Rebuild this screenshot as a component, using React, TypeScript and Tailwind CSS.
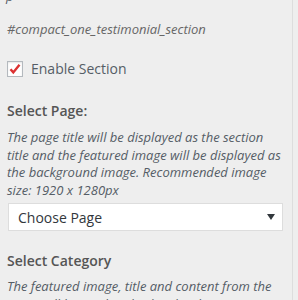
import React from 'react';

const font = { fontFamily: '"Open Sans", "Noto Sans", sans-serif' };

const App = () => {
  return (
    <div className="w-[298px] h-[300px] overflow-hidden bg-[#eeeeee] flex text-[#555d66]" style={font}>
      <div className="w-[293px] shrink-0 border-r border-[#dddddd] pl-[7px] pr-[10px]">
        {/* tail of the previous control's text */}
        <p className="text-[13px] leading-[18px] italic -mt-[13px] -ml-[1px]">p</p>

        <p className="mt-[15px] text-[13px] leading-[18px] italic text-[#666]">#compact_one_testimonial_section</p>

        <label className="mt-[21px] flex items-center gap-[8px]">
          <span className="relative w-[16px] h-[16px] bg-white border border-[#b4b9be] shadow-[inset_0_1px_2px_rgba(0,0,0,0.1)]">
            <svg viewBox="0 0 16 16" className="w-[16px] h-[16px] absolute -left-[1px] -top-[1px]">
              <path d="M3.5 8.2l2.8 3.2 6.2-7.6" fill="none" stroke="#dc3232" strokeWidth="2.4" strokeLinejoin="miter" />
            </svg>
          </span>
          <span className="text-[14px] leading-[20px]">Enable Section</span>
        </label>

        <h3 className="mt-[20px] text-[14px] leading-[24px] font-semibold text-[#555]">Select Page:</h3>
        <p className="mt-[6px] text-[13px] leading-[17.5px] italic">
          The page title will be displayed as the section title and the featured image will be displayed as the background image. Recommended image size: 1920 x 1280px
        </p>

        <div className="mt-[4px] ml-[1px] h-[28px] w-[275px] bg-white border border-[#dddddd] flex items-center justify-between pl-[9px] pr-[7px]">
          <span className="text-[14px] text-[#32373c]">Choose Page</span>
          <svg viewBox="0 0 8 6" className="w-[8px] h-[6px]">
            <path d="M0 0h8L4 6z" fill="#32373c" />
          </svg>
        </div>

        <h3 className="mt-[18px] text-[14px] leading-[24px] font-semibold text-[#555]">Select Category</h3>
        <p className="mt-[5px] text-[13px] leading-[17.5px] italic">
          The featured image, title and content from the posts will be used to display the client testimonials.
        </p>
      </div>
    </div>
  );
};

export default App;
